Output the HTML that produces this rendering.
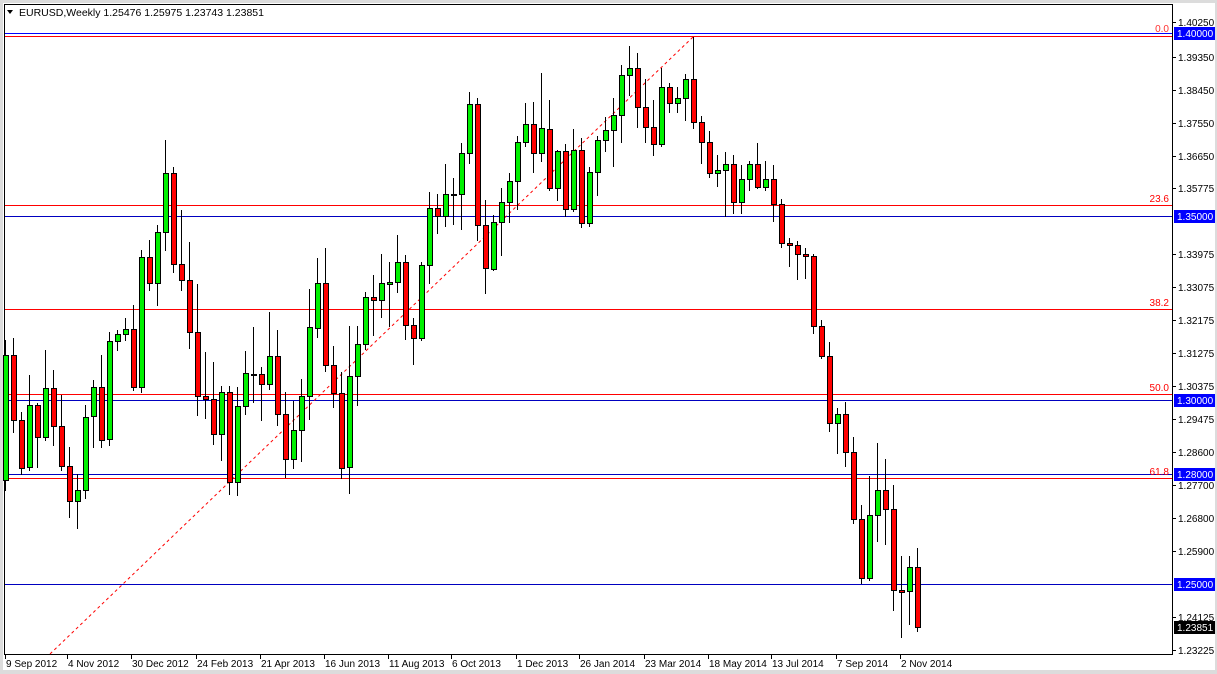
<!DOCTYPE html>
<html><head><meta charset="utf-8"><style>
html,body{margin:0;padding:0;background:#dcdcdc;}
#w{position:relative;width:1217px;height:674px;overflow:hidden;background:#dcdcdc;}
svg{position:absolute;left:0;top:0;}
text{font-family:"Liberation Sans",sans-serif;font-size:10px;}
</style></head><body><div id="w">
<svg id="s" width="1217" height="674" xmlns="http://www.w3.org/2000/svg">
<rect x="3" y="3" width="1212" height="667" fill="#fff"/>
<line x1="4.5" y1="4" x2="4.5" y2="655" stroke="#000"/>
<line x1="4" y1="4.5" x2="1173" y2="4.5" stroke="#000"/>
<line x1="1172.5" y1="4" x2="1172.5" y2="655" stroke="#000"/>
<line x1="4" y1="654.5" x2="1173" y2="654.5" stroke="#000"/>
<g id="lines"></g>
<g id="c"></g>
<g id="ax"></g>
<polygon points="7,10 13,10 10,14" fill="#000"/>
<text x="19" y="16" fill="#000" style="font-size:10.5px">EURUSD,Weekly  1.25476 1.25975 1.23743 1.23851</text>
</svg>
<script>
var NS="http://www.w3.org/2000/svg";
function el(p,t,a,txt){var e=document.createElementNS(NS,t);for(var k in a)e.setAttribute(k,a[k]);if(txt)e.textContent=txt;p.appendChild(e);return e;}
var L=document.getElementById('lines');
function hl(y,c){el(L,'line',{x1:5,x2:1172,y1:y+0.5,y2:y+0.5,stroke:c});}
hl(33,'#0000ff');hl(36,'#ff0000');hl(205,'#ff0000');hl(216,'#0000c0');hl(309,'#ff0000');
hl(394,'#ff0000');hl(400,'#0000c0');hl(474,'#0000c0');hl(478,'#ff0000');hl(584,'#0000c0');
el(L,'line',{x1:50,y1:654,x2:693,y2:37,stroke:'#ff0000','stroke-dasharray':'3,3'});
[['0.0',32,'#ff3030'],['23.6',202],['38.2',306],['50.0',391],['61.8',475]].forEach(function(f){el(L,'text',{x:1169,y:f[1],'text-anchor':'end',fill:f[2]||'#ff0000'},f[0]);});
var D=[
[5,'g',340,355,480,490],[13,'r',338,355,420,432],[21,'r',412,420,468,474],[29,'g',375,405,467,470],[37,'r',403,405,437,467],
[45,'g',350,388,437,440],[53,'r',370,388,426,445],[61,'r',395,426,466,470],[69,'r',447,466,501,517],[77,'g',474,490,501,528],
[85,'g',405,417,490,498],[93,'g',380,387,416,447],[101,'r',355,387,440,447],[109,'g',332,341,439,445],[117,'g',330,334,341,350],
[125,'g',318,329,334,340],[133,'r',305,329,387,390],[141,'g',250,257,387,392],[149,'r',240,257,283,290],[157,'g',225,232,283,305],
[165,'g',140,173,232,250],[173,'r',167,173,264,272],[181,'r',210,264,280,290],[189,'r',242,280,332,348],[197,'r',284,332,396,415],
[205,'r',352,396,399,418],[213,'r',362,399,434,444],[221,'g',386,392,434,460],[229,'r',386,392,482,494],[237,'g',387,406,482,495],
[245,'g',351,373,406,414],[253,'g',327,374,375,402],[261,'r',367,374,384,420],[269,'g',312,356,384,389],[277,'r',330,356,414,425],
[285,'r',392,414,459,477],[293,'g',401,430,459,468],[301,'g',379,396,430,461],[309,'g',289,327,396,419],[317,'g',258,283,328,337],
[325,'r',248,283,365,371],[333,'r',346,365,393,407],[341,'r',372,393,468,478],[349,'g',326,376,467,493],[357,'g',326,344,376,405],
[365,'g',292,297,344,349],[373,'r',275,297,300,335],[381,'g',254,283,300,317],[389,'g',262,282,284,326],[397,'g',235,262,282,292],
[405,'r',255,262,325,339],[413,'r',318,325,338,364],[421,'g',262,265,338,340],[429,'g',192,208,265,283],[437,'r',194,208,216,233],
[445,'g',164,194,216,226],[453,'g',178,194,195,224],[461,'g',143,153,194,229],[469,'g',92,104,153,163],[477,'r',98,104,225,240],
[485,'r',200,225,268,293],[493,'g',215,222,269,270],[501,'g',188,202,222,255],[509,'g',173,181,202,222],[517,'g',136,142,181,209],
[525,'g',103,124,142,146],[533,'r',102,124,153,172],[541,'g',73,128,153,161],[549,'r',100,129,188,190],[557,'g',150,151,188,200],
[565,'r',144,151,209,216],[573,'g',129,150,209,211],[581,'r',138,150,223,227],[589,'g',167,172,223,226],[597,'g',136,140,172,195],
[605,'g',117,130,140,151],[613,'g',98,115,130,166],[621,'g',65,75,115,142],[629,'g',46,68,75,95],[637,'r',53,68,107,127],
[645,'r',79,107,127,142],[653,'r',100,127,144,155],[661,'g',68,87,144,146],[669,'r',83,87,103,112],[677,'g',87,98,103,112],
[685,'g',74,79,98,120],[693,'r',37,79,122,128],[701,'r',116,122,142,163],[709,'r',131,142,173,177],[717,'g',155,170,173,186],
[725,'g',152,164,170,216],[733,'r',155,164,202,213],[741,'g',165,179,202,213],[749,'g',161,164,179,190],[757,'r',143,164,187,188],
[765,'g',161,179,187,190],[773,'r',165,179,204,221],[781,'r',199,204,243,247],[789,'r',238,243,245,266],[797,'r',241,245,254,279],
[805,'r',248,254,256,278],[813,'r',254,256,326,333],[821,'r',320,326,356,358],[829,'r',342,356,423,431],[837,'g',408,414,423,453],
[845,'r',402,414,452,466],[853,'r',437,452,519,523],[861,'r',505,519,578,583],[869,'g',476,515,578,580],[877,'g',443,490,515,541],
[885,'r',459,490,509,544],[893,'r',485,509,590,610],[901,'r',556,590,592,637],[909,'g',556,567,591,624],[917,'r',548,567,627,631]];
var C=document.getElementById('c');
D.forEach(function(d){var x=d[0];
el(C,'line',{x1:x+0.5,x2:x+0.5,y1:d[2],y2:d[5]+1,stroke:'#000'});
var h=Math.max(d[4]-d[3],1);
el(C,'rect',{x:x-2+0.5,y:d[3]+0.5,width:5,height:h,fill:d[1]=='g'?'#00f000':'#ff0000',stroke:'#000'});});
var A=document.getElementById('ax');
var P=[['1.40250',22],['1.39350',57],['1.38450',90],['1.37550',123],['1.36650',156],['1.35775',188],['1.33975',254],['1.33075',287],
['1.32175',320],['1.31275',353],['1.30375',386],['1.29475',419],['1.28600',452],['1.27700',485],['1.26800',518],['1.25900',551],['1.24125',617],['1.23225',650]];
P.forEach(function(p){el(A,'line',{x1:1173,x2:1176,y1:p[1]+0.5,y2:p[1]+0.5,stroke:'#000'});el(A,'text',{x:1178,y:p[1]+4,fill:'#000'},p[0]);});
[['1.40000',33,'#0000ff'],['1.35000',216,'#0000ff'],['1.30000',400,'#0000ff'],['1.28000',474,'#0000ff'],['1.25000',584,'#0000ff'],['1.23851',627,'#000']].forEach(function(b){
el(A,'rect',{x:1174,y:b[1]-6,width:41,height:13,fill:b[2]});el(A,'text',{x:1177,y:b[1]+4,fill:'#fff'},b[0]);});
var T=[['9 Sep 2012',5],['4 Nov 2012',67],['30 Dec 2012',131],['24 Feb 2013',196],['21 Apr 2013',260],['16 Jun 2013',324],['11 Aug 2013',388],
['6 Oct 2013',451],['1 Dec 2013',516],['26 Jan 2014',579],['23 Mar 2014',644],['18 May 2014',708],['13 Jul 2014',771],['7 Sep 2014',836],['2 Nov 2014',900]];
T.forEach(function(t){el(A,'line',{x1:t[1]+0.5,x2:t[1]+0.5,y1:655,y2:659,stroke:'#000'});el(A,'text',{x:t[1]+1,y:667,fill:'#000'},t[0]);});
</script>
</div></body></html>
